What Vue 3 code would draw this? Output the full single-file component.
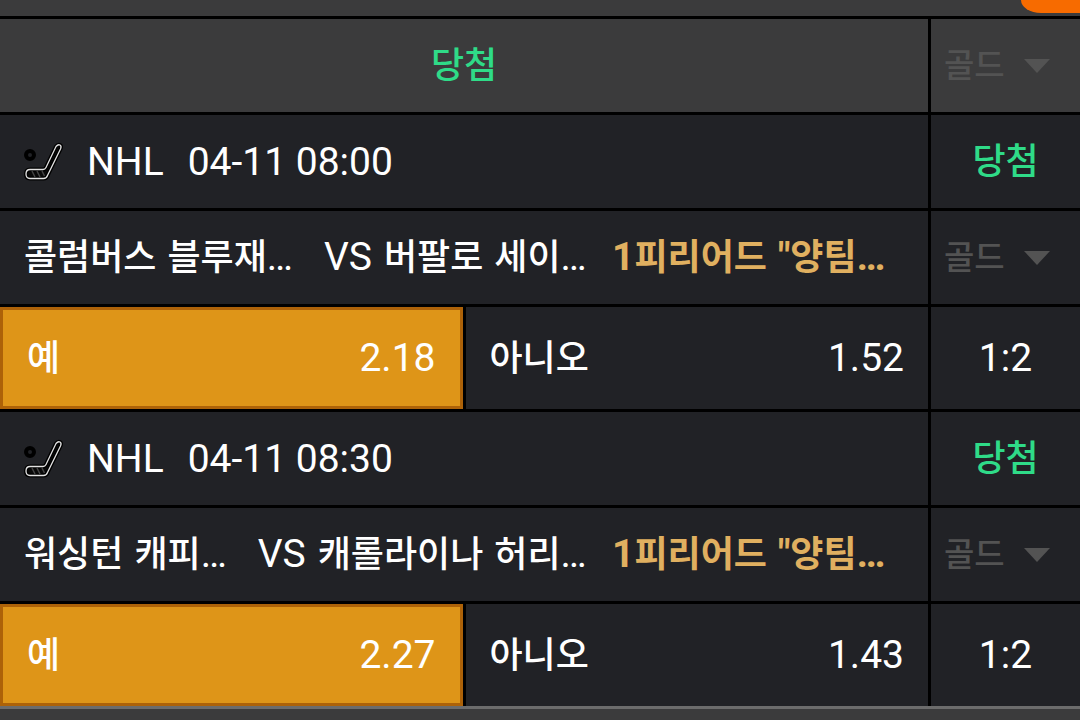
<script setup>
const games = [
  {
    id: 1,
    league: 'NHL',
    time: '04-11 08:00',
    home: ['콜럼버스', '블루재'],
    away: ['버팔로', '세이'],
    yes: '2.18',
    no: '1.52',
    score: '1:2'
  },
  {
    id: 2,
    league: 'NHL',
    time: '04-11 08:30',
    home: ['워싱턴', '캐피'],
    away: ['캐롤라이나', '허리'],
    yes: '2.27',
    no: '1.43',
    score: '1:2'
  }
]
</script>

<template>
  <main class="page">
    <div class="topbar"><button class="action" type="button" aria-label="메뉴"></button></div>
    <table class="bets">
      <colgroup>
        <col />
        <col />
        <col class="side-col" />
      </colgroup>
      <thead>
        <tr>
          <th colspan="2" class="win">당첨</th>
          <th class="side">
            <label class="gold">
              <select aria-label="골드" disabled><option>골드</option></select>
              <svg class="caret" viewBox="0 0 26 14"><path d="M0 0H26L13 14Z" /></svg>
            </label>
          </th>
        </tr>
      </thead>
      <tbody v-for="g in games" :key="g.id">
        <tr>
          <td colspan="2">
            <div class="league">
              <svg class="stick" viewBox="0 0 40 40">
                <circle cx="6" cy="13" r="4" fill="none" stroke="#000" stroke-width="4" />
                <path class="halo" d="M32 4.500Q34 2 36 3Q37.800 4 36.500 7L23.500 33.500Q22.500 36.500 19.500 36.500H6Q2 36.500 2 32Q2 27.500 6 27.500H19Q21 27.500 22 25.500Z" />
                <path class="tape" d="M8 29L11 35M13 29L16 35M18 29L20.500 34" />
                <path class="edge" d="M32 4.500Q34 2 36 3Q37.800 4 36.500 7L23.500 33.500Q22.500 36.500 19.500 36.500H6Q2 36.500 2 32Q2 27.500 6 27.500H19Q21 27.500 22 25.500Z" />
              </svg>
              <span class="latin">{{ g.league }}</span>
              <span class="latin time">{{ g.time }}</span>
            </div>
          </td>
          <td class="side win">당첨</td>
        </tr>
        <tr>
          <td colspan="2">
            <div class="match">
              <div class="teams">
                <span class="name"><span>{{ g.home[0] }}</span> <span>{{ g.home[1] }}<span class="latin">…</span></span></span>
                <span class="versus latin">VS</span>
                <span class="name"><span>{{ g.away[0] }}</span> <span>{{ g.away[1] }}<span class="latin">…</span></span></span>
              </div>
              <strong class="market name"><span><span class="latin">1</span>피리어드</span> <span><span class="latin">"</span>양팀<span class="latin">…</span></span></strong>
            </div>
          </td>
          <td class="side">
            <label class="gold">
              <select aria-label="골드" disabled><option>골드</option></select>
              <svg class="caret" viewBox="0 0 26 14"><path d="M0 0H26L13 14Z" /></svg>
            </label>
          </td>
        </tr>
        <tr class="odds-row">
          <td>
            <button class="pick picked" type="button"><span>예</span><span class="latin">{{ g.yes }}</span></button>
          </td>
          <td>
            <button class="pick" type="button"><span>아니오</span><span class="latin">{{ g.no }}</span></button>
          </td>
          <td class="side latin">{{ g.score }}</td>
        </tr>
      </tbody>
    </table>
  </main>
</template>

<style>
body {
  background: #3b3b3c;
}
</style>

<style scoped>
.page {
  overflow: hidden;
  color: #fff;
  font: 500 36px/48px Roboto, "Noto Sans CJK KR", sans-serif;
}
.topbar {
  display: flex;
  justify-content: flex-end;
  height: 16px;
}
.action {
  width: 59px;
  height: 13px;
  padding: 0;
  border: 0;
  border-bottom-left-radius: 20px 13px;
  background: #f76b00;
}
.bets {
  width: 100%;
  table-layout: fixed;
  border-collapse: separate;
  border-spacing: 0;
  border-top: 3px solid #000;
  border-bottom: 3px solid #6c6c6c;
}
.side-col {
  width: 149px;
}
th,
td {
  box-sizing: border-box;
  height: 96px;
  padding: 0;
  border-bottom: 3px solid #000;
  border-right: 3px solid #000;
  background: #212226;
  font-weight: 500;
  white-space: nowrap;
}
th {
  background: #3b3b3c;
}
th.side,
td.side {
  border-right: 0;
  text-align: center;
}
.win {
  padding-top: 1px;
  color: #2fdb88;
}
.latin,
td.latin {
  font-size: 39px;
  font-weight: 400;
}
.league,
.match,
.teams,
.gold {
  display: flex;
  align-items: center;
}
.league {
  padding-left: 24px;
}
.stick {
  width: 40px;
  height: 40px;
  margin-right: 23px;
}
.halo {
  fill: #090909;
  stroke: #000;
  stroke-width: 4;
}
.edge {
  fill: none;
  stroke: #e2e2e2;
  stroke-width: 1.3;
}
.tape {
  fill: none;
  stroke: #444;
  stroke-width: 1.5;
}
.time {
  margin-left: 24px;
}
.match {
  padding-left: 24px;
}
.teams {
  flex: 0 0 588px;
  align-items: baseline;
}
.name {
  display: flex;
  align-items: baseline;
  gap: 11px;
}
.versus {
  margin: 0 12px 0 31px;
}
.market,
.market .latin {
  color: #e0b060;
  font-weight: 700;
}
.gold {
  gap: 18px;
  padding-left: 13px;
}
select {
  width: 62px;
  padding: 0;
  border: 0;
  appearance: none;
  background: transparent;
  color: #535353;
  opacity: 1;
  font: inherit;
  font-size: 33px;
}
.caret {
  width: 26px;
  height: 14px;
  fill: #535353;
}
.odds-row td {
  height: 105px;
}
.pick {
  display: flex;
  align-items: baseline;
  justify-content: space-between;
  box-sizing: border-box;
  width: 100%;
  height: 102px;
  padding: 27px 24px 0;
  border: 0;
  background: transparent;
  color: #fff;
  font: inherit;
}
.picked {
  padding-top: 24px;
  border: 3px solid #ad6208;
  background: #de9518;
}
tbody:last-child .odds-row td {
  height: 102px;
  border-bottom: 0;
}
</style>
